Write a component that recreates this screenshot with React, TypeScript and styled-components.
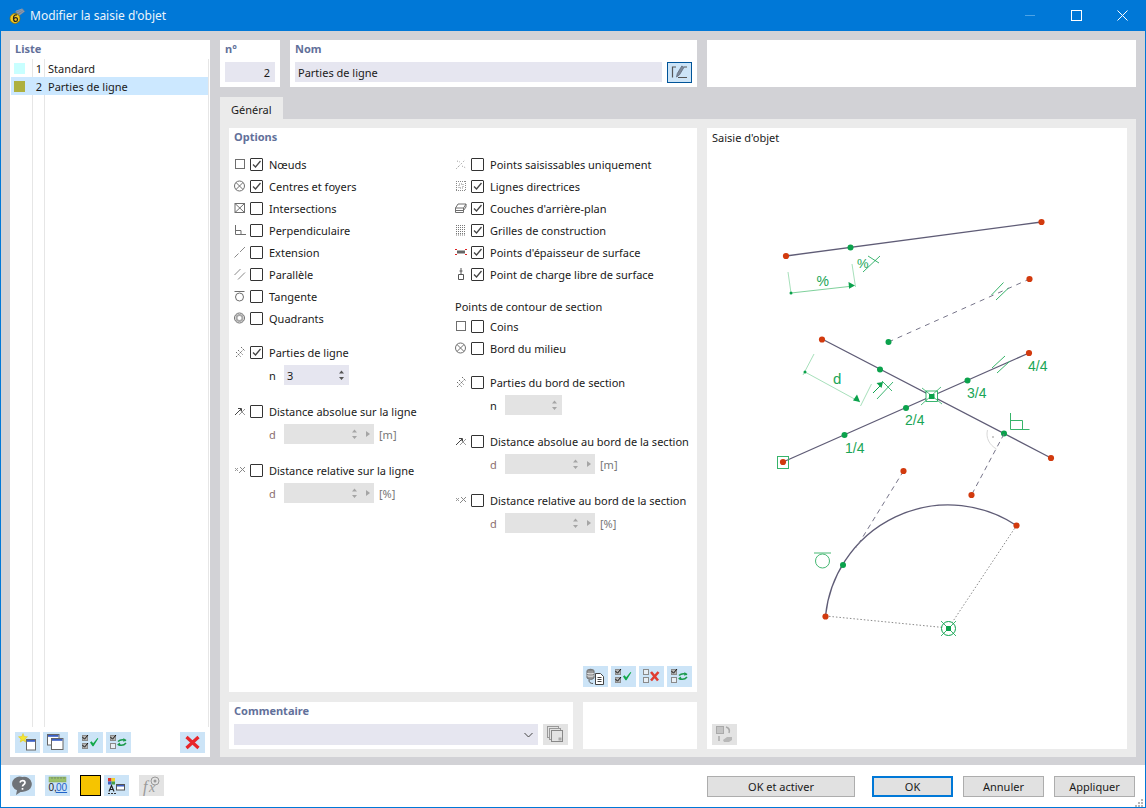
import React from "react";
import styled, { createGlobalStyle } from "styled-components";

const GlobalStyle = createGlobalStyle`
  html, body {
    margin: 0;
    padding: 0;
    background: #fff;
  }
  body {
    font-family: "Noto Sans", "Liberation Sans", sans-serif;
    font-size: 11px;
    color: #1a1a1a;
  }
`;

const Window = styled.div`
  width: 1146px;
  height: 808px;
  box-sizing: border-box;
  border: 1px solid #0078d7;
  border-top: 0;
  display: flex;
  flex-direction: column;
  overflow: hidden;
`;

const TitleBar = styled.div`
  height: 31px;
  margin: 0 -1px;
  flex: none;
  background: #0078d7;
  color: #fff;
  display: flex;
  align-items: center;
  padding: 0 1px 0 9px;
  font-size: 12px;
`;

const TitleText = styled.span`
  flex: 1;
  margin-left: 5px;
  opacity: 0.92;
`;

const WinButton = styled.div`
  width: 46px;
  height: 31px;
  display: flex;
  align-items: center;
  justify-content: center;
`;

const Body = styled.div`
  flex: 1;
  background: #d2d2d6;
  padding: 9px 9px 8px;
  display: grid;
  grid-template-columns: 200px 916px;
  column-gap: 10px;
  min-height: 0;
`;

const ListPanel = styled.div`
  background: #fff;
  display: flex;
  flex-direction: column;
  height: 717px;
`;

const PanelTitle = styled.div`
  font-weight: 700;
  color: #62709a;
  line-height: 17px;
  padding: 0 5px;
`;

const ListTitle = styled(PanelTitle)`
  line-height: 18px;
`;

const ListBody = styled.div`
  flex: 1;
  margin: 1px 1px 5px 1px;
  border-right: 1px solid #e6e6e6;
  background:
    linear-gradient(#e6e6e6, #e6e6e6) 21px 0 / 1px 100% no-repeat,
    linear-gradient(#e6e6e6, #e6e6e6) 33px 0 / 1px 100% no-repeat;
`;

const ListRow = styled.div<{ $active?: boolean }>`
  height: 18px;
  display: grid;
  grid-template-columns: 21px 10px 6px 1fr;
  align-items: center;
  background: ${(p) => (p.$active ? "#cce8ff" : "transparent")};
`;

const Swatch = styled.span<{ $color: string }>`
  width: 11px;
  height: 11px;
  margin-left: 3px;
  background: ${(p) => p.$color};
`;

const ListNum = styled.span`
  text-align: right;
`;

const ListName = styled.span`
  grid-column: 4;
`;

const Toolbar = styled.div<{ $end?: boolean }>`
  display: flex;
  gap: 3px;
  justify-content: ${(p) => (p.$end ? "flex-end" : "flex-start")};
`;

const ListToolbar = styled(Toolbar)`
  padding: 0 5px 4px;
`;

const ToolButton = styled.div<{ $off?: boolean; $gapLeft?: number }>`
  width: 25px;
  height: 21px;
  flex: none;
  background: ${(p) => (p.$off ? "#e3e3e3" : "#cce4f7")};
  margin-left: ${(p) => p.$gapLeft ?? 0}px;
  svg {
    display: block;
  }
`;

const RightColumn = styled.div`
  display: flex;
  flex-direction: column;
  height: 717px;
`;

const TopRow = styled.div`
  display: grid;
  grid-template-columns: 60px 407px 429px;
  column-gap: 10px;
  height: 47px;
  flex: none;
`;

const TopCell = styled.div`
  background: #fff;
`;

const FieldTitle = styled(PanelTitle)`
  line-height: 18px;
  margin-bottom: 4px;
`;

const NumberBox = styled.div`
  height: 20px;
  margin: 0 5px;
  background: #e6e6f0;
  text-align: right;
  line-height: 21px;
  padding-right: 5px;
`;

const NameRow = styled.div`
  display: flex;
  padding-left: 5px;
  gap: 5px;
`;

const NameBox = styled.div`
  width: 364px;
  height: 20px;
  background: #e6e6f0;
  line-height: 21px;
  padding-left: 3px;
`;

const EditButton = styled.div`
  width: 25px;
  height: 21px;
  box-sizing: border-box;
  background: #cce4f7;
  border: 1px solid #005499;
`;

const TabStrip = styled.div`
  margin-top: 10px;
  height: 22px;
  flex: none;
`;

const Tab = styled.div`
  width: 63px;
  height: 22px;
  background: #ebebeb;
  padding-left: 11px;
  box-sizing: border-box;
  line-height: 25px;
`;

const TabPanel = styled.div`
  flex: 1;
  background: #ebebeb;
  padding: 9px;
  display: grid;
  grid-template-columns: 468px 420px;
  column-gap: 10px;
  min-height: 0;
`;

const LeftStack = styled.div`
  display: flex;
  flex-direction: column;
  gap: 10px;
`;

const OptionsPanel = styled.div`
  height: 564px;
  box-sizing: border-box;
  background: #fff;
  padding-bottom: 5px;
  display: flex;
  flex-direction: column;
`;

const OptionsTitle = styled(PanelTitle)`
  line-height: 18px;
  margin-bottom: 7px;
`;

const OptionColumns = styled.div`
  flex: 1;
  display: grid;
  grid-template-columns: 221px 1fr;
  padding-left: 5px;
`;

const Column = styled.div`
  display: flex;
  flex-direction: column;
`;

const OptionRow = styled.div<{ $gap?: number }>`
  height: 22px;
  display: flex;
  align-items: center;
  margin-top: ${(p) => p.$gap ?? 0}px;
  white-space: nowrap;
`;

const OptionIcon = styled.span`
  width: 12px;
  height: 12px;
  margin-right: 4px;
  flex: none;
  svg {
    display: block;
  }
`;

const CheckBox = styled.span`
  width: 13px;
  height: 13px;
  box-sizing: border-box;
  border: 1px solid #333;
  border-radius: 1px;
  background: #fff;
  flex: none;
  margin-right: 6px;
  svg {
    display: block;
  }
`;

const GroupHeading = styled.div`
  height: 20px;
  line-height: 20px;
  margin-top: 12px;
  margin-bottom: -2px;
`;

const SubRow = styled.div`
  height: 22px;
  display: flex;
  align-items: center;
  margin-top: 1px;
`;

const SubLabel = styled.span<{ $off?: boolean }>`
  width: 35px;
  padding-left: 35px;
  box-sizing: content-box;
  margin-right: -20px;
  color: ${(p) => (p.$off ? "#8c6f6f" : "#1a1a1a")};
`;

const Spinner = styled.div<{ $width: number; $off?: boolean }>`
  width: ${(p) => p.$width}px;
  height: 20px;
  box-sizing: border-box;
  background: ${(p) => (p.$off ? "#e3e3e3" : "#e6e6f0")};
  line-height: 21px;
  padding-left: 3px;
  display: flex;
  align-items: center;
  justify-content: space-between;
`;

const Unit = styled.span`
  margin-left: 5px;
  color: #777;
`;

const OptionsToolbar = styled(Toolbar)`
  padding-right: 5px;
`;

const BottomRow = styled.div`
  display: grid;
  grid-template-columns: 344px 114px;
  column-gap: 10px;
  height: 47px;
`;

const CommentPanel = styled.div`
  background: #fff;
  padding-right: 5px;
`;

const CommentTitle = styled(PanelTitle)`
  line-height: 18px;
  margin-bottom: 4px;
`;

const CommentRow = styled.div`
  display: flex;
  gap: 5px;
  padding-left: 5px;
`;

const Combo = styled.div`
  width: 304px;
  height: 21px;
  background: #e6e6f0;
  display: flex;
  align-items: center;
  justify-content: flex-end;
  padding-right: 5px;
  box-sizing: border-box;
`;

const BlankPanel = styled.div`
  background: #fff;
`;

const PreviewPanel = styled.div`
  background: #fff;
  height: 621px;
  display: flex;
  flex-direction: column;
`;

const PreviewTitle = styled.div`
  height: 20px;
  line-height: 20px;
  padding-left: 5px;
`;

const PreviewDrawing = styled.svg`
  display: block;
  width: 420px;
  height: 576px;
  flex: none;
  text {
    font-family: "Liberation Sans", sans-serif;
    font-size: 14px;
    fill: #1aa556;
  }
`;

const PreviewFooter = styled.div`
  padding-left: 5px;
`;

const Footer = styled.div`
  height: 42px;
  flex: none;
  background: #fff;
  display: flex;
  padding: 10px 10px 0 9px;
  box-sizing: border-box;
  justify-content: space-between;
  position: relative;
`;

const DialogButton = styled.div<{ $primary?: boolean; $wide?: boolean; $gapLeft?: number }>`
  width: ${(p) => (p.$wide ? 148 : 81)}px;
  height: 21px;
  margin-top: 1px;
  margin-left: ${(p) => p.$gapLeft ?? 0}px;
  box-sizing: border-box;
  background: #e1e1e1;
  border: ${(p) => (p.$primary ? "2px solid #0078d7" : "1px solid #adadad")};
  text-align: center;
  line-height: ${(p) => (p.$primary ? 17 : 19)}px;
`;

const FooterGroup = styled.div`
  display: flex;
`;

const ResizeGrip = styled.svg`
  position: absolute;
  right: 0;
  bottom: 0;
  display: block;
`;

const ColorButton = styled.div`
  width: 21px;
  height: 21px;
  box-sizing: border-box;
  background: #f6c400;
  border: 1px solid #000;
  margin-left: 10px;
  margin-right: 3px;
`;

const Ico = ({ children }: { children: React.ReactNode }) => (
  <svg width="12" height="12" viewBox="0 0 12 12" fill="none" stroke="#6e6e6e" strokeWidth="1">
    {children}
  </svg>
);

const optionIcons: Record<string, React.ReactNode> = {
  node: <rect x="1.5" y="1.5" width="9" height="9" />,
  center: (
    <>
      <circle cx="5.5" cy="6" r="5" />
      <path d="M2 2.500l7 7M9 2.500l-7 7" />
    </>
  ),
  intersect: (
    <>
      <rect x="1" y="1.500" width="9.500" height="9" />
      <path d="M1 1.500l9.500 9M10.500 1.500l-9.500 9" />
    </>
  ),
  perp: <path d="M1.500 1v9.500H12M1.500 6.500H7v4" />,
  extension: <path d="M.5 11.500l4-4M6 6l5-5" stroke="#8a8a8a" />,
  parallel: <path d="M.5 7l6-6M4 11.500l7-7" stroke="#888" />,
  tangent: (
    <>
      <path d="M.5 1.500h10" />
      <circle cx="5.500" cy="7" r="4" />
    </>
  ),
  quadrant: (
    <>
      <circle cx="5.500" cy="6" r="5" />
      <circle cx="5.500" cy="6" r="3" strokeWidth="2" stroke="#a8a8a8" />
    </>
  ),
  parts: <path d="M2 11l8-8M2 6l5 5M4 4l5 5M7 1l4 4" strokeDasharray="1.500 1" />,
  abs: (
    <>
      <path d="M1 10l6-6M4 3.500h3.500V7" stroke="#444" />
      <path d="M5 10l6-6M6 5l5 5" stroke="#999" />
    </>
  ),
  rel: (
    <>
      <path d="M1 4l3 3M4 4L1 7" stroke="#999" />
      <path d="M5 9l6-6M6 3l5 5" stroke="#888" />
    </>
  ),
  grips: <path d="M1 11l9-9M2 3l3 1M7 8l4 2M3 8l1 1" stroke="#999" strokeDasharray="1 1.500" />,
  guide: <path d="M1.500 1v10M10.500 1v10M1 1.500h10M1 10.500h10M4 4h4v4H4z" stroke="#888" strokeDasharray="1 1" />,
  layers: <path d="M.5 6h8l2.500-4H3zM.5 6v4.500h8V6M.5 8.500h8M8.500 8.500L11 5V2" />,
  grid: <path d="M1 1.500h10M1 3.500h10M1 5.500h10M1 7.500h10M1 9.500h10M1 11h10" stroke="#777" strokeDasharray="1 1" />,
  thickness: (
    <>
      <rect x="2" y="4.500" width="8" height="3" fill="#666" stroke="none" />
      <path d="M0 3.500h2M0 8.500h2M10 3.500h2M10 8.500h2" stroke="#d22" />
    </>
  ),
  load: <path d="M6 0v6M4.500 3h3M3.500 6.500h5v5h-5z" stroke="#555" />,
};

const Check = () => (
  <svg width="11" height="11" viewBox="0 0 11 11" fill="none" stroke="#444" strokeWidth="1.300">
    <path d="M2 5.500l2.500 2.500L9.500 2" />
  </svg>
);

interface OptionProps {
  icon: string;
  label: string;
  checked?: boolean;
  gap?: number;
}

const Option = ({ icon, label, checked, gap }: OptionProps) => (
  <OptionRow $gap={gap}>
    <OptionIcon>
      <Ico>{optionIcons[icon]}</Ico>
    </OptionIcon>
    <CheckBox>{checked && <Check />}</CheckBox>
    {label}
  </OptionRow>
);

const SpinArrows = ({ off, side }: { off?: boolean; side?: boolean }) => (
  <svg width={side ? 26 : 14} height="20" viewBox={`0 0 ${side ? 26 : 14} 20`}>
    <path d="M4 8.500l2.500-3 2.500 3zM4 12l2.500 3 2.500-3z" fill={off ? "#a5a5a5" : "#555"} />
    {side && <path d="M18 7l4 3-4 3z" fill="#a5a5a5" />}
  </svg>
);

const Glyph = ({ children }: { children: React.ReactNode }) => (
  <svg width="25" height="21" viewBox="0 0 25 21" fill="none">
    {children}
  </svg>
);

const boxes = (first: boolean, second: boolean) => (
  <>
    <rect x="4.500" y="3.500" width="5" height="5" fill={first ? "#b5b5b5" : "#e8eef4"} stroke="#8a8a8a" />
    <rect x="4.500" y="11.500" width="5" height="5" fill={second ? "#b5b5b5" : "#e8eef4"} stroke="#8a8a8a" />
    {first && <path d="M4.500 5l2 2.200L10 3" stroke="#111" />}
    {second && <path d="M4.500 13l2 2.200L10 11" stroke="#111" />}
  </>
);

const CheckAllIcon = () => (
  <Glyph>
    {boxes(true, true)}
    <path d="M12 10.500l1.500-1.200 1.700 2L19.500 6l.8.500-4.800 7.800h-1z" fill="#12a84b" />
  </Glyph>
);

const SwapIcon = () => (
  <Glyph>
    {boxes(true, false)}
    <path d="M12 9.500c2-2 5-2.300 8-1M20 11c-2 2.500-5 2.800-8 1.500" stroke="#1b9a4c" strokeWidth="1.500" />
    <path d="M17.500 6l3 2.500-3.300 1.200zM14 10.500l-3 2 3.300 1.500z" fill="#1b9a4c" />
  </Glyph>
);

const UncheckIcon = () => (
  <Glyph>
    {boxes(false, false)}
    <path d="M12 6l7 8.500M19.500 6L12 14.500" stroke="#e03c31" strokeWidth="2.600" />
  </Glyph>
);

const NewIcon = () => (
  <Glyph>
    <rect x="11.500" y="7.500" width="9" height="10.500" fill="#fff" stroke="#666" />
    <rect x="12" y="8" width="8" height="1.800" fill="#3b5fc4" />
    <path d="M8 1.500l1.200 3 3.300.3-2.500 2.100.8 3.200L8 8.400l-2.800 1.700.8-3.200-2.500-2.100 3.300-.3z" fill="#f4e531" stroke="#e0c410" strokeWidth=".5" />
  </Glyph>
);

const CopyIcon = () => (
  <Glyph>
    <rect x="4.500" y="2.500" width="11.500" height="10.500" fill="#fff" stroke="#666" />
    <rect x="5" y="3" width="10.500" height="1.800" fill="#3b5fc4" />
    <rect x="8.500" y="6.500" width="11.500" height="11" fill="#fff" stroke="#666" />
    <rect x="9" y="7" width="10.500" height="1.800" fill="#3b5fc4" />
  </Glyph>
);

const DeleteIcon = () => (
  <Glyph>
    <path d="M6.500 5l12 11M18.500 5l-12 11" stroke="#e8262a" strokeWidth="3.200" />
  </Glyph>
);

const DatabaseIcon = () => (
  <Glyph>
    <ellipse cx="7.500" cy="4.500" rx="3.500" ry="1.800" fill="#777" />
    <path d="M4 4.500v7c0 1 1.500 1.800 3.500 1.800s3.500-.8 3.500-1.800v-7" fill="#999" stroke="#666" />
    <path d="M4 7c0 1 7 1 7 0M4 9.500c0 1 7 1 7 0" stroke="#eee" />
    <path d="M6 14c0 2.500 1.500 3.500 4 3.500" stroke="#555" />
    <path d="M12.500 7.500h5l3 3v8h-8z" fill="#fff" stroke="#444" />
    <path d="M14.500 11.500h4M14.500 13.500h4M14.500 15.500h4" stroke="#444" />
  </Glyph>
);

const EditIcon = () => (
  <svg width="23" height="19" viewBox="0 0 23 19" fill="none">
    <path d="M8 4H4.500v10.500M10 14.500h9M16 4h3" stroke="#555" strokeWidth="1.200" />
    <path d="M8.500 14l.8-3.500 4.500-7.500 2.200 1.300-4.500 7.500z" fill="#7f8a99" stroke="#5f6a7b" strokeWidth=".8" />
  </svg>
);

const CopyFormulaIcon = () => (
  <Glyph>
    <rect x="4.500" y="2.500" width="11" height="11" fill="#e3e3e3" stroke="#999" />
    <rect x="6.500" y="4.500" width="11" height="11" fill="#e3e3e3" stroke="#999" />
    <rect x="8.500" y="6.500" width="11" height="11" fill="#e3e3e3" stroke="#888" />
    <rect x="15.500" y="13.500" width="3" height="3" fill="#aaa" />
  </Glyph>
);

const TransferIcon = () => (
  <Glyph>
    <rect x="4.500" y="2.500" width="7" height="7" fill="#c4c4c4" stroke="#aaa" />
    <path d="M14 3c3 1 4 3 3 6M7 12v5" stroke="#aaa" strokeWidth="1.500" />
    <path d="M11 16l4-3h5v3l-3 2h-5z" fill="#b8b8b8" />
  </Glyph>
);

const HelpIcon = () => (
  <Glyph>
    <path d="M12.500 2a7.500 7 0 0 1 3 14.300c-1.500.6-3 .7-5 .7l-4.500 3 1-4.700A7.500 7 0 0 1 12.500 2z" fill="#6f7378" />
    <path d="M10 7.500c.5-2.500 5-2.500 5 .2 0 1.800-2.500 1.800-2.500 3.800M12.500 13v1.800" stroke="#fff" strokeWidth="1.700" />
  </Glyph>
);

const UnitsIcon = () => (
  <Glyph>
    <rect x="4" y="2" width="17" height="5" fill="#9bc16a" stroke="#7da54e" strokeWidth=".5" />
    <path d="M7 2v2M10 2v2M13 2v2M16 2v2M19 2v2" stroke="#557" strokeWidth=".5" />
    <text x="3.500" y="16" fontFamily="Liberation Sans, sans-serif" fontSize="10" fill="#222">0,</text>
    <text x="11" y="16" fontFamily="Liberation Sans, sans-serif" fontSize="10" fill="#1e63c8" textDecoration="underline">00</text>
  </Glyph>
);

const DisplayIcon = () => (
  <Glyph>
    <rect x="4" y="3" width="3.500" height="3.500" fill="#d7342c" />
    <rect x="7.500" y="3" width="3.500" height="3.500" fill="#f0d02c" />
    <rect x="4" y="6.500" width="3.500" height="3" fill="#3b5fc4" />
    <rect x="7.500" y="6.500" width="3.500" height="3" fill="#43a048" />
    <path d="M5 16.500l2.500-6 2.500 6M6 14.500h3" stroke="#222" strokeWidth="1.200" />
    <path d="M4 18.500h8" stroke="#333" strokeDasharray="2 1" />
    <rect x="12.500" y="9.500" width="8" height="5.500" fill="#fff" stroke="#555" />
    <rect x="13" y="10" width="7" height="1.500" fill="#3b5fc4" />
  </Glyph>
);

const FormulaIcon = () => (
  <Glyph>
    <text x="4" y="17" fontFamily="Liberation Serif, serif" fontStyle="italic" fontSize="16" fill="#999">f</text>
    <text x="10" y="17" fontFamily="Liberation Serif, serif" fontStyle="italic" fontSize="14" fill="#999">x</text>
    <circle cx="16" cy="6" r="4" stroke="#999" />
    <circle cx="16" cy="6" r="1.500" fill="#999" />
  </Glyph>
);

const AppIcon = () => (
  <svg width="16" height="16" viewBox="0 0 16 16" fill="none">
    <path d="M6 3.500L13.500.5 16 3.500 10 8z" fill="#76859a" />
    <path d="M7 3l6-2M8 5l6-3M10 7l5-4" stroke="#a9b5c4" strokeWidth=".5" />
    <circle cx="6" cy="10.500" r="5" fill="#f2c81e" stroke="#8a6d00" strokeWidth=".7" />
    <path d="M8 7c-2-.6-3.500.5-3.500 3.200s1 3.300 2.200 3.300 1.800-1 1.800-1.900-.9-1.900-1.900-1.900-1.600.6-1.900 1.200" stroke="#222" strokeWidth="1.200" />
  </svg>
);

const green = "#0ba24c";
const pale = "#a7e0bb";
const line = "#5f5c76";
const dash = "#77758a";
const red = "#d23a0e";

const RedDot = ({ x, y }: { x: number; y: number }) => <circle cx={x} cy={y} r="3.100" fill={red} />;
const GreenDot = ({ x, y }: { x: number; y: number }) => <circle cx={x} cy={y} r="3" fill={green} />;

const ObjectSnapDrawing = () => (
  <PreviewDrawing viewBox="707 148 420 576" fill="none">
    {/* ligne du haut et cote en % */}
    <path d="M786 256L1041.500 222" stroke={line} strokeWidth="1.300" />
    <path d="M788 272l3 21M852 264l3.500 23" stroke={pale} />
    <path d="M791 293l58-6.500" stroke="#7fd19c" />
    <path d="M855 285.500l-6.500-3.500.6 6.800z" fill={green} />
    <circle cx="791" cy="293" r="1.500" fill={green} />
    <text x="816.500" y="286">%</text>
    <text x="857" y="268" style={{ fontSize: 13 }}>%</text>
    <path d="M863 272l17-16M868 256l11 7" stroke={green} strokeWidth=".8" />
    <GreenDot x={850.500} y={247.500} />
    <RedDot x={786} y={256} />
    <RedDot x={1041.500} y={222} />

    {/* parallele en pointilles */}
    <path d="M888.500 342L1029.500 279" stroke={dash} strokeDasharray="5 5" />
    <path d="M991.500 295l12-12.500M996 300l12.500-12" stroke="#37b46a" />
    <GreenDot x={888.500} y={342} />
    <RedDot x={1029.500} y={279} />

    {/* lignes croisees */}
    <path d="M822 339L1051 458M783 462L1029 353" stroke={line} strokeWidth="1.300" />
    <path d="M805 372l55 30" stroke={pale} />
    <path d="M803 375l11-21M860.500 406l11-22" stroke={pale} />
    <path d="M860 402l-3-7.500-4 6z" fill={green} />
    <circle cx="805" cy="372" r="1.500" fill={green} />
    <text x="833" y="384" style={{ fontSize: 15 }}>d</text>
    <path d="M873 393l8-8" stroke={green} />
    <path d="M883 382l-6.500 1 5 5z" fill={green} />
    <path d="M877 399l16-17M882 381l10 10" stroke={green} strokeWidth=".8" />
    <path d="M992 368l13-12M997 373l13-12" stroke="#37b46a" />
    <rect x="777.500" y="456.500" width="11" height="12" stroke="#37b46a" />
    <rect x="926" y="391" width="11.500" height="10.500" stroke={green} strokeWidth=".8" fill="#fff" />
    <path d="M922 388l20 16M941 387l-20 18" stroke={green} strokeWidth=".7" />
    <rect x="929" y="394" width="5.500" height="5" fill={green} />
    <GreenDot x={880} y={369.500} />
    <GreenDot x={844.500} y={435} />
    <GreenDot x={906} y={408} />
    <GreenDot x={967.500} y={380.500} />
    <GreenDot x={1004} y={433.500} />
    <RedDot x={822} y={339.500} />
    <RedDot x={1029} y={353} />
    <RedDot x={783} y={462} />
    <RedDot x={1051} y={458} />
    <text x="845" y="453">1/4</text>
    <text x="905" y="425">2/4</text>
    <text x="967" y="398">3/4</text>
    <text x="1028" y="371">4/4</text>

    {/* perpendiculaire */}
    <path d="M1010.500 413v16.500h19M1010.500 420.500h12v9" stroke="#37b46a" />
    <path d="M987.500 430c-2 8 2 15 9 19" stroke="#d8d8d8" />
    <circle cx="993" cy="437" r=".8" fill="#888" />
    <path d="M1004 434l-32 60" stroke={dash} strokeDasharray="5 4" />
    <RedDot x={971.500} y={495} />

    {/* arc et tangente */}
    <path d="M825.500 616A123.500 123.500 0 0 1 1016.500 525.500" stroke={line} strokeWidth="1.300" />
    <path d="M903.500 471L856 548" stroke={dash} strokeDasharray="5 4" />
    <path d="M825.500 616l123 12M1016.500 525.500L948.500 628" stroke="#8a8a8a" strokeDasharray="1.500 2" />
    <path d="M814 553h17" stroke="#46b873" />
    <circle cx="822.500" cy="561" r="7" stroke="#46b873" />
    <circle cx="948.500" cy="628.500" r="7" stroke={green} fill="#fff" />
    <path d="M941 621l15 15M956 621l-15 15" stroke={green} strokeWidth=".8" />
    <rect x="946" y="626" width="5" height="5" fill={green} />
    <GreenDot x={843} y={565} />
    <RedDot x={903.500} y={471} />
    <RedDot x={1016.500} y={525.500} />
    <RedDot x={825.500} y={616.500} />
  </PreviewDrawing>
);

export default function App() {
  return (
    <>
      <GlobalStyle />
      <Window>
        <TitleBar>
          <AppIcon />
          <TitleText>Modifier la saisie d'objet</TitleText>
          <WinButton>
            <svg width="11" height="11" viewBox="0 0 11 11">
              <path d="M0 5.500h10" stroke="#4da3e6" />
            </svg>
          </WinButton>
          <WinButton>
            <svg width="11" height="11" viewBox="0 0 11 11" fill="none">
              <rect x=".5" y=".5" width="10" height="10" stroke="#fff" />
            </svg>
          </WinButton>
          <WinButton>
            <svg width="11" height="11" viewBox="0 0 11 11" fill="none">
              <path d="M.5.500l10 10M10.500.500l-10 10" stroke="#fff" />
            </svg>
          </WinButton>
        </TitleBar>
        <Body>
          <ListPanel>
            <ListTitle>Liste</ListTitle>
            <ListBody>
              <ListRow>
                <Swatch $color="#c8ffff" />
                <ListNum>1</ListNum>
                <ListName>Standard</ListName>
              </ListRow>
              <ListRow $active>
                <Swatch $color="#aeb03f" />
                <ListNum>2</ListNum>
                <ListName>Parties de ligne</ListName>
              </ListRow>
            </ListBody>
            <ListToolbar>
              <ToolButton>
                <NewIcon />
              </ToolButton>
              <ToolButton>
                <CopyIcon />
              </ToolButton>
              <ToolButton $gapLeft={7}>
                <CheckAllIcon />
              </ToolButton>
              <ToolButton>
                <SwapIcon />
              </ToolButton>
              <ToolButton $gapLeft={46}>
                <DeleteIcon />
              </ToolButton>
            </ListToolbar>
          </ListPanel>
          <RightColumn>
            <TopRow>
              <TopCell>
                <FieldTitle>n°</FieldTitle>
                <NumberBox>2</NumberBox>
              </TopCell>
              <TopCell>
                <FieldTitle>Nom</FieldTitle>
                <NameRow>
                  <NameBox>Parties de ligne</NameBox>
                  <EditButton>
                    <EditIcon />
                  </EditButton>
                </NameRow>
              </TopCell>
              <TopCell />
            </TopRow>
            <TabStrip>
              <Tab>Général</Tab>
            </TabStrip>
            <TabPanel>
              <LeftStack>
                <OptionsPanel>
                  <OptionsTitle>Options</OptionsTitle>
                  <OptionColumns>
                    <Column>
                      <Option icon="node" label="Nœuds" checked />
                      <Option icon="center" label="Centres et foyers" checked />
                      <Option icon="intersect" label="Intersections" />
                      <Option icon="perp" label="Perpendiculaire" />
                      <Option icon="extension" label="Extension" />
                      <Option icon="parallel" label="Parallèle" />
                      <Option icon="tangent" label="Tangente" />
                      <Option icon="quadrant" label="Quadrants" />
                      <Option icon="parts" label="Parties de ligne" checked gap={12} />
                      <SubRow>
                        <SubLabel>n</SubLabel>
                        <Spinner $width={65}>
                          3
                          <SpinArrows />
                        </Spinner>
                      </SubRow>
                      <Option icon="abs" label="Distance absolue sur la ligne" gap={14} />
                      <SubRow>
                        <SubLabel $off>d</SubLabel>
                        <Spinner $width={90} $off>
                          <span />
                          <SpinArrows off side />
                        </Spinner>
                        <Unit>[m]</Unit>
                      </SubRow>
                      <Option icon="rel" label="Distance relative sur la ligne" gap={14} />
                      <SubRow>
                        <SubLabel $off>d</SubLabel>
                        <Spinner $width={90} $off>
                          <span />
                          <SpinArrows off side />
                        </Spinner>
                        <Unit>[%]</Unit>
                      </SubRow>
                    </Column>
                    <Column>
                      <Option icon="grips" label="Points saisissables uniquement" />
                      <Option icon="guide" label="Lignes directrices" checked />
                      <Option icon="layers" label="Couches d'arrière-plan" checked />
                      <Option icon="grid" label="Grilles de construction" checked />
                      <Option icon="thickness" label="Points d'épaisseur de surface" checked />
                      <Option icon="load" label="Point de charge libre de surface" checked />
                      <GroupHeading>Points de contour de section</GroupHeading>
                      <Option icon="node" label="Coins" />
                      <Option icon="center" label="Bord du milieu" />
                      <Option icon="parts" label="Parties du bord de section" gap={12} />
                      <SubRow>
                        <SubLabel>n</SubLabel>
                        <Spinner $width={57} $off>
                          <span />
                          <SpinArrows off />
                        </Spinner>
                      </SubRow>
                      <Option icon="abs" label="Distance absolue au bord de la section" gap={14} />
                      <SubRow>
                        <SubLabel $off>d</SubLabel>
                        <Spinner $width={90} $off>
                          <span />
                          <SpinArrows off side />
                        </Spinner>
                        <Unit>[m]</Unit>
                      </SubRow>
                      <Option icon="rel" label="Distance relative au bord de la section" gap={14} />
                      <SubRow>
                        <SubLabel $off>d</SubLabel>
                        <Spinner $width={90} $off>
                          <span />
                          <SpinArrows off side />
                        </Spinner>
                        <Unit>[%]</Unit>
                      </SubRow>
                    </Column>
                  </OptionColumns>
                  <OptionsToolbar $end>
                    <ToolButton>
                      <DatabaseIcon />
                    </ToolButton>
                    <ToolButton>
                      <CheckAllIcon />
                    </ToolButton>
                    <ToolButton>
                      <UncheckIcon />
                    </ToolButton>
                    <ToolButton>
                      <SwapIcon />
                    </ToolButton>
                  </OptionsToolbar>
                </OptionsPanel>
                <BottomRow>
                  <CommentPanel>
                    <CommentTitle>Commentaire</CommentTitle>
                    <CommentRow>
                      <Combo>
                        <svg width="9" height="6" viewBox="0 0 9 6" fill="none">
                          <path d="M.5 1l4 4 4-4" stroke="#444" />
                        </svg>
                      </Combo>
                      <ToolButton $off>
                        <CopyFormulaIcon />
                      </ToolButton>
                    </CommentRow>
                  </CommentPanel>
                  <BlankPanel />
                </BottomRow>
              </LeftStack>
              <PreviewPanel>
                <PreviewTitle>Saisie d'objet</PreviewTitle>
                <ObjectSnapDrawing />
                <PreviewFooter>
                  <ToolButton $off>
                    <TransferIcon />
                  </ToolButton>
                </PreviewFooter>
              </PreviewPanel>
            </TabPanel>
          </RightColumn>
        </Body>
        <Footer>
          <FooterGroup>
            <ToolButton>
              <HelpIcon />
            </ToolButton>
            <ToolButton $gapLeft={10}>
              <UnitsIcon />
            </ToolButton>
            <ColorButton />
            <ToolButton>
              <DisplayIcon />
            </ToolButton>
            <ToolButton $off $gapLeft={10}>
              <FormulaIcon />
            </ToolButton>
          </FooterGroup>
          <FooterGroup>
            <DialogButton $wide>OK et activer</DialogButton>
            <DialogButton $primary $gapLeft={17}>
              OK
            </DialogButton>
            <DialogButton $gapLeft={10}>Annuler</DialogButton>
            <DialogButton $gapLeft={10}>Appliquer</DialogButton>
          </FooterGroup>
          <ResizeGrip width="11" height="9" viewBox="0 0 11 9" fill="#b5b5b5">
            <rect x="7" y="1" width="2" height="2" />
            <rect x="4" y="4" width="2" height="2" />
            <rect x="7" y="4" width="2" height="2" />
            <rect x="1" y="7" width="2" height="2" />
            <rect x="4" y="7" width="2" height="2" />
            <rect x="7" y="7" width="2" height="2" />
          </ResizeGrip>
        </Footer>
      </Window>
    </>
  );
}
